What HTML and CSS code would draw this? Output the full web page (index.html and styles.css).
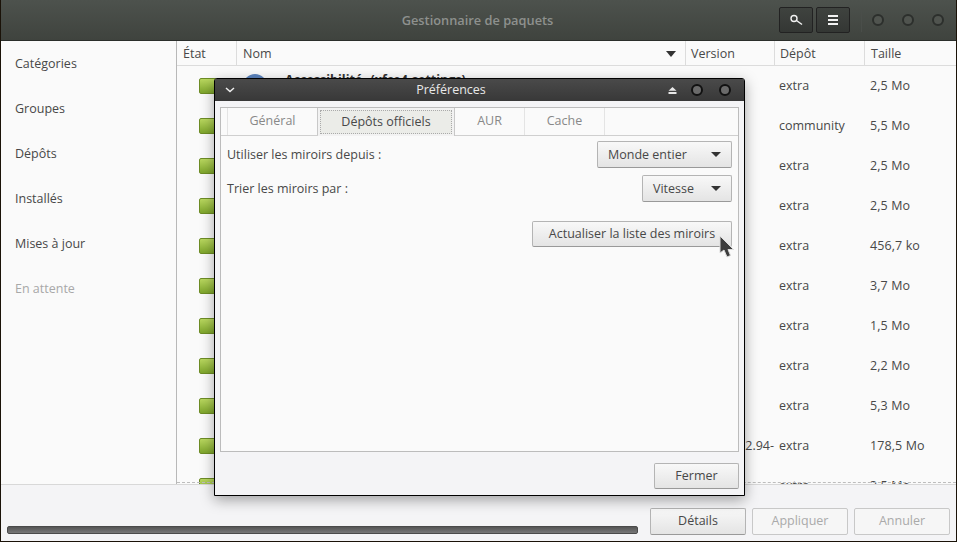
FILE: index.html
```html
<!DOCTYPE html>
<html lang="fr">
<head>
    <meta charset="UTF-8">
    <title>Gestionnaire de paquets</title>
    <link rel="stylesheet" href="styles.css">
</head>
<body>
<div class="app">
    <div class="titlebar">
        <div class="title">Gestionnaire de paquets</div>
        <div class="head-btn">
            <svg width="16" height="16" viewBox="0 0 16 16"><circle cx="6" cy="6.500" r="3" fill="none" stroke="#f2f2f2" stroke-width="1.400"/><path d="M8.500 8.500l5.500 4" stroke="#f2f2f2" stroke-width="1.400"/></svg>
        </div>
        <div class="head-btn head-btn-menu">
            <svg width="10" height="10" viewBox="0 0 10 10"><path d="M0 1h10M0 5h10M0 9h10" stroke="#f2f2f2" stroke-width="2"/></svg>
        </div>
        <div class="head-sep"></div>
        <div class="win-dots">
            <span class="dot"></span>
            <span class="dot"></span>
            <span class="dot"></span>
        </div>
    </div>

    <div class="main">
        <ul class="sidebar">
            <li>Catégories</li>
            <li>Groupes</li>
            <li>Dépôts</li>
            <li>Installés</li>
            <li>Mises à jour</li>
            <li class="muted">En attente</li>
        </ul>
        <div class="list">
            <div class="row row-head">
                <div class="c-state">État</div>
                <div class="c-name">Nom<span class="sort"></span></div>
                <div class="c-ver">Version</div>
                <div class="c-repo">Dépôt</div>
                <div class="c-size">Taille</div>
            </div>
            <div class="row">
                <div class="c-state"><span class="check"></span></div>
                <div class="c-name"><span class="pkg-icon"></span><b class="pkg-name">Accessibilité (xfce4-settings)</b></div>
                <div class="c-ver"></div><div class="c-repo">extra</div><div class="c-size">2,5 Mo</div>
            </div>
            <div class="row">
                <div class="c-state"><span class="check"></span></div>
                <div class="c-name"></div><div class="c-ver"></div><div class="c-repo">community</div><div class="c-size">5,5 Mo</div>
            </div>
            <div class="row">
                <div class="c-state"><span class="check"></span></div>
                <div class="c-name"></div><div class="c-ver"></div><div class="c-repo">extra</div><div class="c-size">2,5 Mo</div>
            </div>
            <div class="row">
                <div class="c-state"><span class="check"></span></div>
                <div class="c-name"></div><div class="c-ver"></div><div class="c-repo">extra</div><div class="c-size">2,5 Mo</div>
            </div>
            <div class="row">
                <div class="c-state"><span class="check"></span></div>
                <div class="c-name"></div><div class="c-ver"></div><div class="c-repo">extra</div><div class="c-size">456,7 ko</div>
            </div>
            <div class="row">
                <div class="c-state"><span class="check"></span></div>
                <div class="c-name"></div><div class="c-ver"></div><div class="c-repo">extra</div><div class="c-size">3,7 Mo</div>
            </div>
            <div class="row">
                <div class="c-state"><span class="check"></span></div>
                <div class="c-name"></div><div class="c-ver"></div><div class="c-repo">extra</div><div class="c-size">1,5 Mo</div>
            </div>
            <div class="row">
                <div class="c-state"><span class="check"></span></div>
                <div class="c-name"></div><div class="c-ver"></div><div class="c-repo">extra</div><div class="c-size">2,2 Mo</div>
            </div>
            <div class="row">
                <div class="c-state"><span class="check"></span></div>
                <div class="c-name"></div><div class="c-ver"></div><div class="c-repo">extra</div><div class="c-size">5,3 Mo</div>
            </div>
            <div class="row">
                <div class="c-state"><span class="check"></span></div>
                <div class="c-name"></div><div class="c-ver ver-cut">2.94-</div><div class="c-repo">extra</div><div class="c-size">178,5 Mo</div>
            </div>
            <div class="row">
                <div class="c-state"><span class="check"></span></div>
                <div class="c-name"></div><div class="c-ver"></div><div class="c-repo">extra</div><div class="c-size">3,5 Mo</div>
            </div>
            <div class="rubber"></div>
        </div>
    </div>

    <div class="footer">
        <div class="progress"></div>
        <button class="btn btn-foot">Détails</button>
        <button class="btn btn-foot" disabled>Appliquer</button>
        <button class="btn btn-foot" disabled>Annuler</button>
    </div>
</div>

<div class="dialog">
    <div class="dialog-bar">
        <svg class="dialog-menu" width="10" height="6" viewBox="0 0 10 6"><path d="M1 1l4 3.500L9 1" fill="none" stroke="#eee" stroke-width="1.500"/></svg>
        <div class="dialog-title">Préférences</div>
        <svg class="eject" width="9" height="7" viewBox="0 0 9 7"><path d="M4.500 0l4 3.800h-8zM.5 5h8v2h-8z" fill="#e8e8e8"/></svg>
        <span class="dot dot-light"></span>
        <span class="dot dot-light"></span>
    </div>
    <div class="dialog-body">
        <div class="notebook">
            <div class="tabs">
                <div class="tab tab-stub"></div>
                <div class="tab tab-general">Général</div>
                <div class="tab tab-active"><span class="focus">Dépôts officiels</span></div>
                <div class="tab tab-aur">AUR</div>
                <div class="tab tab-cache">Cache</div>
            </div>
            <div class="page">
                <div class="opt">
                    <span>Utiliser les miroirs depuis :</span>
                    <button class="btn btn-combo btn-wide">Monde entier<i class="arrow"></i></button>
                </div>
                <div class="opt">
                    <span>Trier les miroirs par :</span>
                    <button class="btn btn-combo btn-short">Vitesse<i class="arrow"></i></button>
                </div>
                <div class="opt opt-refresh">
                    <button class="btn btn-refresh">Actualiser la liste des miroirs</button>
                </div>
            </div>
        </div>
        <div class="dialog-actions">
            <button class="btn btn-close">Fermer</button>
        </div>
    </div>
</div>

<svg class="cursor" width="16" height="24" viewBox="0 0 16 24"><path d="M1 1v17l4-3 3 7 3.500-1.500-2.500-6h5.500z" fill="#3d3d3d" stroke="#dcdcdc" stroke-width="1"/></svg>
</body>
</html>
```

FILE: styles.css
```css
* {
    margin: 0;
    padding: 0;
    box-sizing: border-box;
}
html, body {
    width: 957px;
    height: 542px;
    overflow: hidden;
}
body {
    position: relative;
    font-family: "Open Sans", "Noto Sans", sans-serif;
    font-size: 12.5px;
    color: #484848;
    background: #1a1208;
}
.app {
    height: 541px;
    margin: 0 1px 1px;
    display: flex;
    flex-direction: column;
    background: #fafafa;
}

/* top bar */
.titlebar {
    height: 41px;
    flex: none;
    display: flex;
    align-items: center;
    position: relative;
    padding-left: 778px;
    background: linear-gradient(#4d524d, #3f433e);
    border-bottom: 1px solid #2b2e2b;
}
.title {
    position: absolute;
    left: 0;
    right: 2px;
    text-align: center;
    font-size: 12.8px;
    font-weight: 600;
    color: #8e918e;
}
.head-btn {
    width: 34px;
    height: 26px;
    margin-right: 3px;
    display: flex;
    align-items: center;
    justify-content: center;
    background: linear-gradient(#3f433f, #343734);
    border: 1px solid #222;
    border-radius: 2px;
}
.head-btn svg {
    position: relative;
}
.head-sep {
    width: 1px;
    height: 24px;
    margin: 0 10px 0 8px;
    background: #4a4e4a;
}
.win-dots {
    display: flex;
    gap: 18px;
}
.dot {
    display: block;
    width: 12px;
    height: 12px;
    border-radius: 50%;
    border: 2px solid #2c2f2c;
    background: #50544f;
}
.dot-light {
    border-color: #111;
    background: #6a6a6a;
}

/* main area */
.main {
    flex: 1;
    display: flex;
    min-height: 0;
}
.sidebar {
    width: 175px;
    flex: none;
    list-style: none;
}
.sidebar li {
    height: 45px;
    line-height: 45px;
    padding-left: 14px;
}
.sidebar .muted {
    color: #a8a8a8;
}
.list {
    flex: 1;
    position: relative;
    overflow: hidden;
    border-left: 1px solid #b8b8b8;
}
.row {
    height: 40px;
    display: flex;
    align-items: center;
}
.row-head {
    height: 25px;
    border-bottom: 1px solid #dcdcdc;
}
.row-head > div {
    height: 24px;
    line-height: 25px;
    border-right: 1px solid #dcdcdc;
}
.row-head .c-size {
    border-right: 0;
}
.c-state {
    width: 60px;
    padding-left: 6px;
}
.row .c-state {
    padding-left: 22px;
}
.row-head .c-state {
    padding-left: 6px;
}
.c-name {
    width: 449px;
    padding-left: 6px;
    display: flex;
    align-items: center;
    position: relative;
}
.c-ver {
    width: 89px;
    padding-left: 5px;
    padding-bottom: 2px;
}
.c-repo {
    width: 90px;
    padding-left: 4px;
    padding-bottom: 2px;
}
.c-size {
    flex: 1;
    padding-left: 5px;
    padding-bottom: 2px;
    letter-spacing: .1px;
}
.row-head .c-ver {
    padding: 0 0 0 5px;
}
.row-head .c-repo {
    padding: 0 0 0 5px;
}
.row-head .c-size {
    padding: 0 0 0 6px;
    letter-spacing: 0;
}
.ver-cut {
    text-align: right;
    padding-right: 1px;
}
.sort {
    position: absolute;
    right: 9px;
    top: 10px;
    border: 5px solid transparent;
    border-top: 6px solid #333;
    border-bottom: 0;
}
.check {
    display: block;
    width: 18px;
    height: 16px;
    border-radius: 2px;
    border: 1px solid #6d8c25;
    background: linear-gradient(#b9d75f, #7ea52c);
}
.pkg-icon {
    width: 24px;
    height: 24px;
    flex: none;
    border-radius: 50%;
    background: #5b83bd;
}
.pkg-name {
    margin: -14px 0 0 18px;
    color: #333;
    word-spacing: 5px;
}
.rubber {
    position: absolute;
    left: 0;
    right: 0;
    bottom: 1px;
    border-top: 1px dashed #bdbdbd;
}

/* bottom bar */
.footer {
    height: 57px;
    flex: none;
    display: flex;
    align-items: flex-end;
    padding: 0 5px 6px 6px;
    gap: 6px;
    background: #f4f4f6;
    border-top: 1px solid #d8d8d8;
}
.progress {
    width: 631px;
    height: 8px;
    margin: 0 6px 1px 0;
    border-radius: 2px;
    border: 1px solid #4a4a4a;
    background: linear-gradient(#555, #777);
}
.btn {
    font: inherit;
    color: #484848;
    height: 27px;
    padding-bottom: 2px;
    border: 1px solid #b4b4b4;
    border-bottom-color: #999;
    border-radius: 2px;
    background: linear-gradient(#f8f8f8, #e4e4e4);
}
.btn:disabled {
    color: #aaa;
    background: #f6f6f6;
    border-color: #c8c8c8;
}
.btn-foot {
    width: 96px;
}

/* preferences window */
.dialog {
    position: absolute;
    left: 214px;
    top: 78px;
    width: 531px;
    height: 418px;
    display: flex;
    flex-direction: column;
    border: 1px solid #000;
    border-radius: 3px 3px 0 0;
    background: #f4f4f6;
    box-shadow: 0 4px 14px rgba(0, 0, 0, .35);
}
.dialog-bar {
    height: 22px;
    flex: none;
    display: flex;
    align-items: center;
    padding: 0 13px 0 10px;
    position: relative;
    background: linear-gradient(#4a4a4a, #383838);
    color: #e8e8e8;
}
.dialog-title {
    position: absolute;
    left: 0;
    right: 57px;
    text-align: center;
    padding-bottom: 1px;
}
.dialog-bar svg {
    position: relative;
}
.dialog-menu {
    margin-right: auto;
}
.dialog-bar .dot {
    position: relative;
    margin-left: 16px;
}
.dialog-bar .eject + .dot {
    margin-left: 14px;
}
.dialog-body {
    flex: 1;
    display: flex;
    flex-direction: column;
    padding: 6px 5px;
}
.notebook {
    height: 345px;
    flex: none;
    display: flex;
    flex-direction: column;
    border: 1px solid #bcbcbc;
    background: #fafafa;
}
.tabs {
    height: 28px;
    flex: none;
    display: flex;
    border-bottom: 1px solid #cfcfcf;
}
.tab {
    display: flex;
    align-items: center;
    justify-content: center;
    padding-bottom: 2px;
    color: #888;
    border-right: 1px solid #e4e4e4;
}
.tab-stub {
    width: 7px;
}
.tab-general {
    width: 90px;
    border-right-color: #c8c8c8;
}
.tab-active {
    width: 137px;
    color: #484848;
    padding: 2px;
    height: 28px;
    background: #f2f2f2;
    border-right: 1px solid #c8c8c8;
}
.focus {
    width: 100%;
    height: 100%;
    display: flex;
    align-items: center;
    justify-content: center;
    padding-bottom: 1px;
    border: 1px dotted #aaa;
    background: #ebece8;
}
.tab-aur {
    width: 70px;
}
.tab-cache {
    width: 80px;
}
.page {
    flex: 1;
    padding: 5px 6px 0 6px;
}
.opt {
    display: flex;
    align-items: center;
    justify-content: space-between;
    margin-bottom: 7px;
}
.btn-combo {
    height: 27px;
    display: flex;
    align-items: center;
    justify-content: space-between;
    padding: 0 10px 1px;
}
.btn-wide {
    width: 135px;
}
.btn-short {
    width: 90px;
}
.arrow {
    width: 0;
    height: 0;
    border: 5px solid transparent;
    border-top: 5px solid #333;
    border-bottom: 0;
}
.opt-refresh {
    justify-content: flex-end;
    margin-top: 19px;
}
.btn-refresh {
    width: 200px;
    height: 26px;
}
.dialog-actions {
    display: flex;
    justify-content: flex-end;
    padding-top: 11px;
}
.btn-close {
    width: 85px;
    height: 26px;
}
.cursor {
    position: absolute;
    left: 719px;
    top: 235px;
}
```
